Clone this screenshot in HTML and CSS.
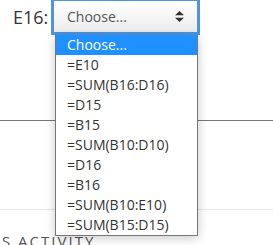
FILE: index.html
```html
<!DOCTYPE html>
<html>
<head>
  <meta charset="UTF-8">
  <title>Formula</title>
  <link rel="stylesheet" href="styles.css">
</head>
<body>
  <section class="celda">
    <label class="celda-nombre">E16:</label>
    <div class="selector">
      <span>Choose...</span>
      <svg class="flechas" width="9" height="11" viewBox="0 0 9 11">
        <path d="M4.5 0 L9 4.3 H0 Z M0 6.7 H9 L4.5 11 Z" fill="#333"/>
      </svg>
    </div>
    <ul class="opciones">
      <li class="activa">Choose...</li>
      <li>=E10</li>
      <li>=SUM(B16:D16)</li>
      <li>=D15</li>
      <li>=B15</li>
      <li>=SUM(B10:D10)</li>
      <li>=D16</li>
      <li>=B16</li>
      <li>=SUM(B10:E10)</li>
      <li>=SUM(B15:D15)</li>
    </ul>
  </section>

  <hr class="linea">
  <hr class="linea-suave">

  <h3 class="titulo">S ACTIVITY</h3>
</body>
</html>
```

FILE: styles.css
```css
/* Estilos generales */
body {
  font-family: 'Open Sans', sans-serif;
  margin: 0;
  padding: 0;
  background-color: #fff;
  overflow: hidden;
}

/* Fila de la celda */
.celda {
  position: relative;
  display: flex;
  align-items: center;
  padding-left: 13px;
  margin-top: -2px;
}

.celda-nombre {
  font-size: 18px;
  color: #333;
  width: 38px;
}

.selector {
  box-sizing: border-box;
  width: 149px;
  height: 37px;
  border: 3px solid #4e95dc;
  background: linear-gradient(#fff, #ececec);
  display: flex;
  align-items: center;
  justify-content: space-between;
  padding: 0 13px 0 13px;
  font-size: 14px;
  color: #555;
}

.flechas {
  display: block;
}

/* Lista desplegable */
.opciones {
  position: absolute;
  left: 55px;
  top: 37px;
  width: 141px;
  margin: 0;
  padding: 0;
  list-style-type: none;
  background-color: #fff;
  border: 1px solid #767676;
  border-top: none;
  box-shadow: 0 2px 10px rgba(0, 0, 0, 0.22);
  z-index: 2;
}

.opciones li {
  height: 20px;
  line-height: 20px;
  padding-left: 11px;
  font-size: 14px;
  color: #333;
}

.opciones li.activa {
  background-color: #1e90ff;
  color: #fff;
}

/* Lineas del fondo */
.linea {
  margin: 85px 0 0 0;
  border: none;
  border-top: 1px solid #777;
}

.linea-suave {
  margin: 88px 0 0 0;
  border: none;
  border-top: 1px solid #e8e8e8;
}

.titulo {
  margin: 21px 0 0 2px;
  font-size: 15px;
  font-weight: normal;
  letter-spacing: 2px;
  color: #555;
}
```
